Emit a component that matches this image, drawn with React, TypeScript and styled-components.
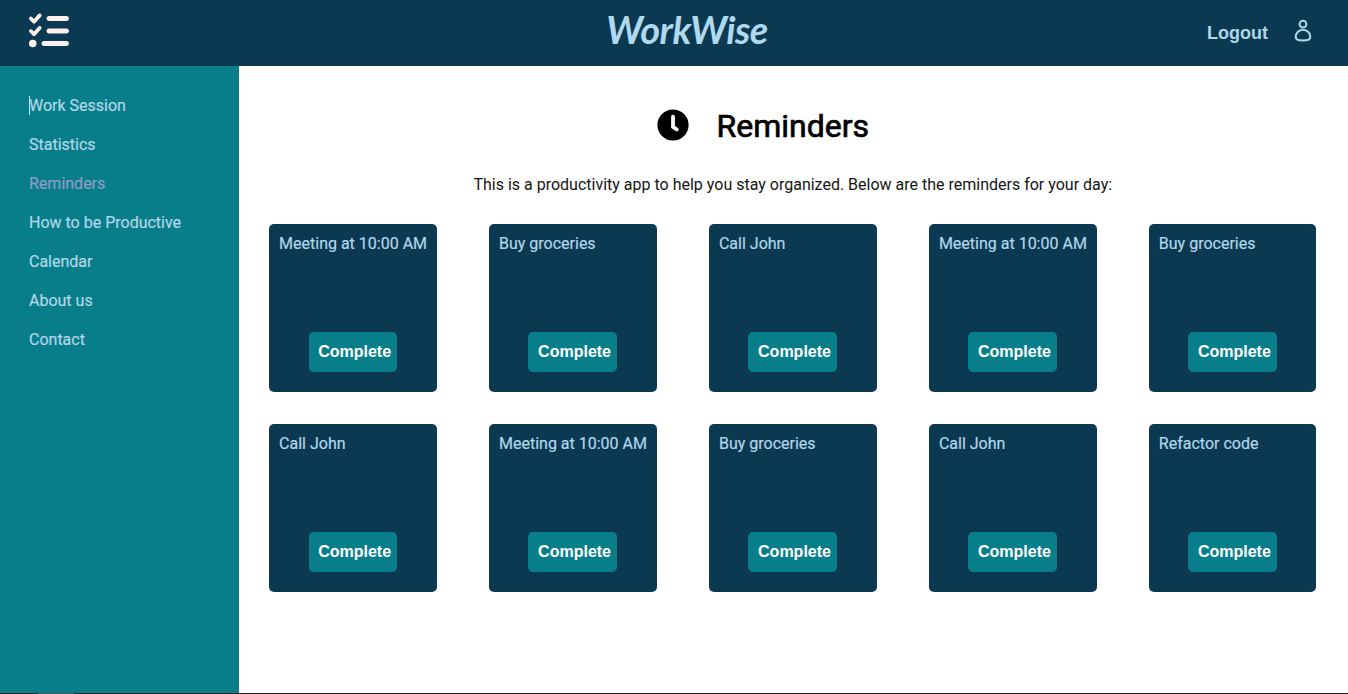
import React from 'react';
import styled, { createGlobalStyle } from 'styled-components';
import { FaListCheck } from 'react-icons/fa6';

const GlobalStyle = createGlobalStyle`
  * { box-sizing: border-box; }
  body { margin: 0; font-family: Roboto, sans-serif; font-size: 16px; background: #fff; color: #000; }
`;

const Page = styled.div`
  height: 694px;
  display: flex;
  flex-direction: column;
  overflow: hidden;
`;

const Header = styled.header`
  flex: none;
  height: 66px;
  padding: 0 36px 0 29px;
  display: grid;
  grid-template-columns: 1fr auto 1fr;
  background: #0c3952;
  color: #b0d6ea;
`;

const ListLogo = styled(FaListCheck)`
  width: 40px;
  height: 40px;
  margin-top: 10.5px;
  color: #fff0f0;
`;

const Brand = styled.h1`
  margin: 7px 0 0 33px;
  font: italic 700 38px/44px Lato, sans-serif;
  letter-spacing: -0.6px;
  color: #b0d9ee;
`;

const Account = styled.div`
  display: flex;
  justify-content: flex-end;
  height: 66px;
  align-items: center;
  gap: 26px;
`;

const Logout = styled.a`
  font: 700 18px/22px "Liberation Sans", Arial, sans-serif;
`;

const PersonSvg = styled.svg`
  margin-bottom: 4px;
`;

const Body = styled.div`
  flex: 1;
  display: flex;
  min-height: 0;
`;

const Sidebar = styled.nav`
  flex: none;
  width: 239px;
  padding: 30px 29px;
  display: flex;
  flex-direction: column;
  gap: 19px;
  background: #087e8b;
`;

const NavItem = styled.a<{ $active?: boolean }>`
  height: 20px;
  line-height: 20px;
  white-space: nowrap;
  color: ${(p) => (p.$active ? '#8e9cc4' : '#b3d6e8')};
  -webkit-text-stroke: 0.2px currentColor;
`;

const Caret = styled.span`
  display: inline-block;
  width: 1px;
  height: 19px;
  margin-right: -1px;
  vertical-align: top;
  background: #c4e4ee;
`;

const Main = styled.main`
  flex: 1;
  padding: 40px 31.5px 0 30.0625px;
`;

const Heading = styled.div`
  height: 40px;
  padding-right: 59.5px;
  display: flex;
  justify-content: center;
  align-items: center;
  gap: 27.5px;
`;

const ClockSvg = styled.svg`
  margin-bottom: 2px;
`;

const Title = styled.h2`
  margin: 0;
  font-size: 32px;
  line-height: 40px;
  font-weight: 400;
  -webkit-text-stroke: 0.7px #000;
`;

const Intro = styled.p`
  margin: 29px 0;
  text-align: center;
  line-height: 20px;
  color: #151515;
`;

const Grid = styled.div`
  display: grid;
  grid-template-columns: repeat(5, 167.641px);
  column-gap: 52.297px;
  row-gap: 32px;
`;

const Card = styled.article`
  height: 168px;
  padding: 10px 10px 20px;
  display: flex;
  flex-direction: column;
  justify-content: space-between;
  border-radius: 5px;
  background: #0c3952;
  color: #b0d6ea;
  line-height: 20px;
  white-space: nowrap;
`;

const Reminder = styled.span`
  -webkit-text-stroke: 0.2px currentColor;
`;

const CompleteButton = styled.button`
  align-self: center;
  width: 88.75px;
  height: 40px;
  padding: 0 0 0 3.5px;
  border: 0;
  border-radius: 5px;
  background: #087e8b;
  color: #fff;
  font: 700 16px "Liberation Sans", Arial, sans-serif;
`;

const BottomEdge = styled.footer`
  flex: none;
  height: 1px;
  padding-left: 38px;
  background: #231f20;
`;

const EdgeMark = styled.div`
  width: 36px;
  height: 1px;
  background: #55585a;
`;

const nav = ['Work Session', 'Statistics', 'Reminders', 'How to be Productive', 'Calendar', 'About us', 'Contact'];
const reminders = [
  'Meeting at 10:00 AM', 'Buy groceries', 'Call John', 'Meeting at 10:00 AM', 'Buy groceries',
  'Call John', 'Meeting at 10:00 AM', 'Buy groceries', 'Call John', 'Refactor code',
];

const PersonIcon = () => (
  <PersonSvg width="18" height="24" viewBox="0 0 18 24" fill="none" stroke="#b0d6ea" strokeWidth="2">
    <circle cx="9" cy="5.2" r="3.4" />
    <path d="M9 10.8c4.3 0 7.3 3.6 7.3 7.2 0 2.7-2.2 3.5-7.3 3.5s-7.3-.8-7.3-3.5c0-3.6 3-7.2 7.3-7.2z" />
  </PersonSvg>
);

const ClockIcon = () => (
  <ClockSvg width="32" height="32" viewBox="0 0 32 32">
    <circle cx="16" cy="16" r="15.6" />
    <path d="M16 7.7v10.2l3.8 2.6" fill="none" stroke="#fff" strokeWidth="3.8" strokeLinecap="round" strokeLinejoin="round" />
  </ClockSvg>
);

export default function App() {
  return (
    <>
      <GlobalStyle />
      <Page>
        <Header>
          <ListLogo />
          <Brand>WorkWise</Brand>
          <Account>
            <Logout>Logout</Logout>
            <PersonIcon />
          </Account>
        </Header>
        <Body>
          <Sidebar>
            {nav.map((label, i) => (
              <NavItem key={label} $active={label === 'Reminders'}>
                {i === 0 && <Caret />}
                {label}
              </NavItem>
            ))}
          </Sidebar>
          <Main>
            <Heading>
              <ClockIcon />
              <Title>Reminders</Title>
            </Heading>
            <Intro>This is a productivity app to help you stay organized. Below are the reminders for your day:</Intro>
            <Grid>
              {reminders.map((text, i) => (
                <Card key={i}>
                  <Reminder>{text}</Reminder>
                  <CompleteButton>Complete</CompleteButton>
                </Card>
              ))}
            </Grid>
          </Main>
        </Body>
        <BottomEdge>
          <EdgeMark />
        </BottomEdge>
      </Page>
    </>
  );
}
